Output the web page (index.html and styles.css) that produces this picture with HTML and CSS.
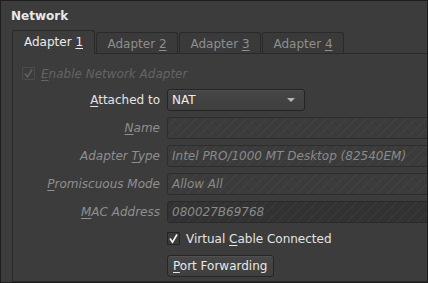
FILE: index.html
```html
<!DOCTYPE html>
<html>
<head>
<meta charset="utf-8">
<link rel="stylesheet" href="styles.css">
</head>
<body>
<div class="window">
  <div class="title">Network</div>
  <div class="tabs">
    <div class="tab active">Adapter <u>1</u></div>
    <div class="tab">Adapter <u>2</u></div>
    <div class="tab">Adapter <u>3</u></div>
    <div class="tab">Adapter <u>4</u></div>
  </div>
  <div class="pane">
    <div class="check-row disabled">
      <span class="box dis"><svg width="11" height="11" viewBox="0 0 11 11"><polyline points="2,5.5 4.5,9 9,1.5" fill="none" stroke="#5f5f5f" stroke-width="1.6"/></svg></span>
      <span class="check-label"><u>E</u>nable Network Adapter</span>
    </div>
    <div class="form">
      <div class="label"><u>A</u>ttached to</div>
      <div class="combo"><span>NAT</span><span class="arrow"></span></div>
      <div class="label dim"><u>N</u>ame</div>
      <div class="field"></div>
      <div class="label dim">Adapter <u>T</u>ype</div>
      <div class="field"><span>Intel PRO/1000 MT Desktop (82540EM)</span></div>
      <div class="label dim"><u>P</u>romiscuous Mode</div>
      <div class="field"><span>Allow All</span></div>
      <div class="label dim"><u>M</u>AC Address</div>
      <div class="field dark"><span>080027B69768</span></div>
    </div>
    <div class="check-row cable">
      <span class="box"><svg width="11" height="11" viewBox="0 0 11 11"><polyline points="2,5.5 4.5,9.2 9,1.5" fill="none" stroke="#f0f0f0" stroke-width="1.7"/></svg></span>
      <span class="check-label on">Virtual <u>C</u>able Connected</span>
    </div>
    <div class="btn-row"><button class="btn"><u>P</u>ort Forwarding</button></div>
  </div>
</div>
</body>
</html>
```
FILE: styles.css
```css
* { box-sizing: border-box; }
html, body { margin: 0; padding: 0; background: #3c3c3c; }
body { font-family: "DejaVu Sans", sans-serif; font-size: 12px; color: #e4e4e4; }
u { text-decoration: underline; text-underline-offset: 2px; text-decoration-thickness: 1px; }

.window {
  width: 428px; height: 283px; overflow: hidden;
  border: 1px solid #1d1d1d;
  background: #3c3c3c;
}
.title { font-weight: bold; line-height: 14px; padding: 8px 0 0 10px; height: 29px; color: #e8e8e8; }

.tabs { display: flex; align-items: flex-end; margin-left: 11px; height: 23px; gap: 1px; position: relative; z-index: 2; }
.tab {
  width: 82px; height: 21px; line-height: 14px; padding-top: 4px; text-align: center;
  border: 1px solid #2a2a2a; border-bottom: none; border-radius: 3px 3px 0 0;
  color: #8e8e8e; background: #3a3a3a;
}
.tab.active { width: 83px; height: 24px; padding-top: 4px; color: #ececec; background: #3c3c3c; margin-bottom: -1px; }

.pane {
  margin-left: 11px; width: 460px; height: 229px;
  border: 1px solid #2a2a2a;
  padding: 13px 0 0 9px;
}
.check-row { display: flex; align-items: center; height: 13px; gap: 6px; }
.box {
  width: 13px; height: 13px; border: 1px solid #232323; border-radius: 1px;
  background: #3a3a3a; display: flex; align-items: center; justify-content: center;
}
.box.dis { border-color: #4c4c4c; background: #3c3c3c; }
.check-label { font-style: italic; color: #646464; line-height: 14px; }
.check-label.on { font-style: normal; color: #e4e4e4; }

.form {
  display: grid; grid-template-columns: 138px 1fr; column-gap: 7px; row-gap: 6px;
  grid-auto-rows: 22px; margin-top: 9px;
}
.label { text-align: right; line-height: 22px; color: #e4e4e4; white-space: nowrap; }
.label.dim { font-style: italic; color: #8f8f8f; }

.combo {
  width: 138px; height: 22px; border: 1px solid #242424; border-radius: 3px;
  background: linear-gradient(#464646, #3f3f3f);
  box-shadow: inset 0 1px 0 #4e4e4e;
  display: flex; align-items: center; justify-content: space-between;
  padding: 0 9px 0 4px; line-height: 14px; color: #ececec;
}
.arrow { width: 0; height: 0; border-left: 4px solid transparent; border-right: 4px solid transparent; border-top: 4px solid #b4b4b4; }

.field {
  height: 22px; border: 1px solid #2d2d2d; border-radius: 3px;
  background: repeating-linear-gradient(135deg, #3b3b3b 0 6px, #464646 6px 7.07px);
  padding-left: 4px; display: flex; align-items: center;
  font-style: italic; color: #8a8a8a; line-height: 14px; white-space: nowrap;
}
.field.dark { background: repeating-linear-gradient(135deg, #323232 0 6px, #3e3e3e 6px 7.07px); border-color: #2a2a2a; }

.cable { margin-top: 9px; margin-left: 145px; }
.btn-row { margin-top: 10px; margin-left: 145px; }
.btn {
  font-family: "DejaVu Sans", sans-serif; font-size: 12px; color: #e8e8e8;
  height: 22px; padding: 0 6px 0 5px; border: 1px solid #262626; border-radius: 3px;
  background: linear-gradient(#474747, #3f3f3f); box-shadow: inset 0 1px 0 #505050;
  line-height: 14px; display: block;
}
```
